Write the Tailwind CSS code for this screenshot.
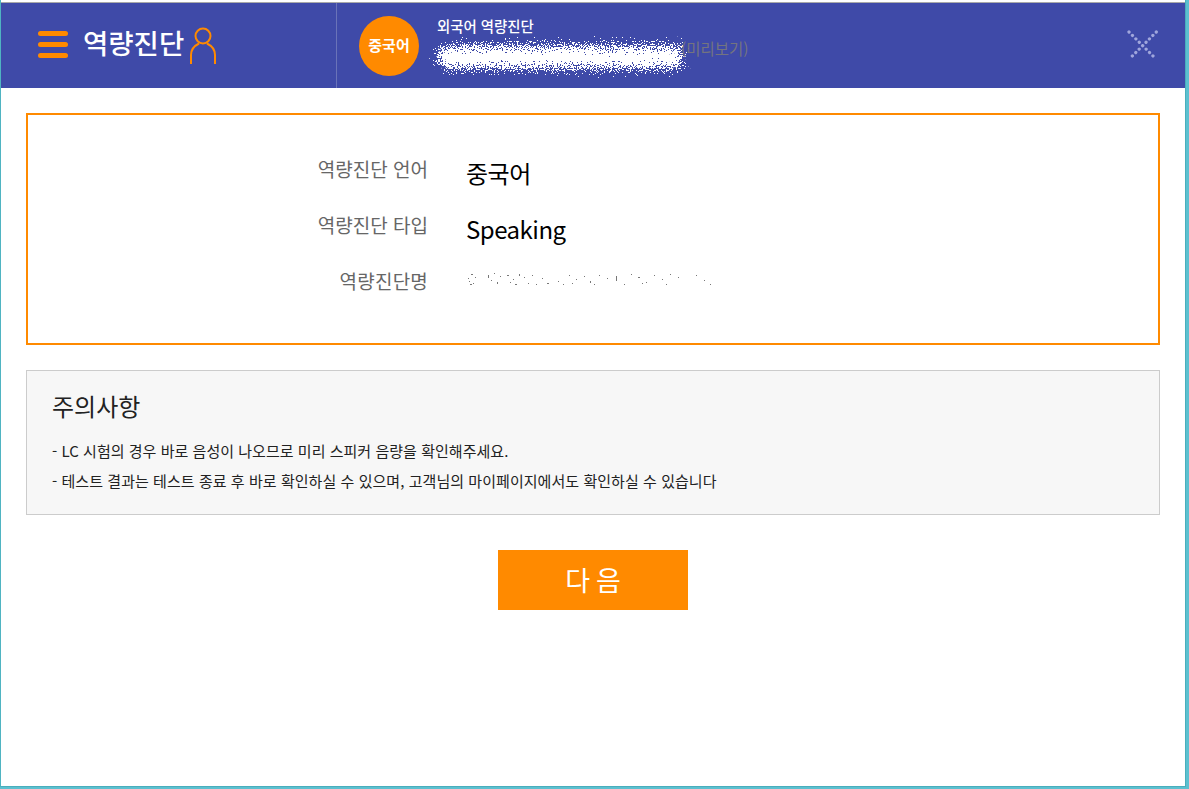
<!DOCTYPE html>
<html lang="ko">
<head>
    <meta charset="UTF-8">
    <title>역량진단</title>
    <script src="https://cdn.jsdelivr.net/npm/@tailwindcss/browser@4"></script>
</head>
<body class="bg-white font-['Noto_Sans_CJK_KR','Noto_Sans',sans-serif] overflow-hidden">
    <svg class="absolute w-0 h-0">
        <filter id="scatter" x="-10%" y="-60%" width="120%" height="220%">
            <feTurbulence type="fractalNoise" baseFrequency="0.75" numOctaves="2" seed="4" />
            <feDisplacementMap in="SourceGraphic" scale="34" xChannelSelector="R" yChannelSelector="G" />
        </filter>
    </svg>

    <div class="w-[1189px] h-[789px] border-r-[3px] border-r-[#5cc0d0] border-b-[2px] border-b-[#5cc0d0]">
        <div class="h-full flex flex-col pt-[2px] border-l border-l-[#4fb4c2] border-r border-r-[#4aaebc] border-b border-b-[#4aaebc]">
            <div class="h-px bg-[#a9a9a9] shrink-0"></div>

            <header class="h-[85px] shrink-0 bg-[#3f4aa8] flex items-center text-white">
                <div class="w-[336px] h-full flex items-center pl-[37px] border-r border-r-[#6a73b8] shrink-0">
                    <div class="flex flex-col gap-[6px] w-[30px] -mt-[2px]">
                        <span class="h-[5px] rounded-full bg-[#ff8a00]"></span>
                        <span class="h-[5px] rounded-full bg-[#ff8a00]"></span>
                        <span class="h-[5px] rounded-full bg-[#ff8a00]"></span>
                    </div>
                    <span class="ml-[15px] -mt-[6px] text-[27.5px] font-medium leading-none">역량진단</span>
                    <svg class="ml-[6px] mt-[1px]" width="26" height="38" viewBox="0 0 26 38" fill="none" stroke="#ff8a00" stroke-width="2">
                        <circle cx="13" cy="9" r="7.5" />
                        <path d="M1 37V28C1 21.5 5 18.5 9 16.5M25 37V28C25 21.5 21 18.5 17 16.5" />
                    </svg>
                </div>
                <div class="flex items-center pl-[22px] flex-1">
                    <div class="w-[60px] h-[60px] rounded-full bg-[#ff8a00] flex items-center justify-center text-[15px] font-bold shrink-0">중국어</div>
                    <div class="ml-[18px] -mt-[9px]">
                        <p class="text-[14.4px] leading-[18px] font-medium">외국어 역량진단</p>
                        <div class="flex items-center h-[30px]">
                            <svg width="262" height="44" class="-ml-[9px] -my-[7px] overflow-visible"><rect x="10" y="18" width="244" height="22" rx="10" fill="#fff" filter="url(#scatter)" /></svg>
                            <span class="-ml-[9px] -mt-[3px] text-[15.5px] text-[#74747f]">(미리보기)</span>
                        </div>
                    </div>
                </div>
                <svg class="mr-[26px] shrink-0" width="32" height="32" viewBox="0 0 32 32" stroke="#a0a6dc" stroke-width="3.2" stroke-linecap="round" stroke-dasharray="0.1 4.73">
                    <path d="M2 2L29.3 29.3M29.3 2L2 29.3" />
                </svg>
            </header>

            <main class="flex-1 px-[25px] pt-[25px]">
                <section class="h-[232px] border-2 border-[#ff8a00] pt-[29px]">
                    <dl class="grid grid-cols-[400px_1fr] gap-x-[38px]">
                        <dt class="h-[56px] text-right text-[19px] leading-[50px] text-[#666]">역량진단 언어</dt>
                        <dd class="h-[56px] text-[24px] tracking-[-0.5px] leading-[58px] text-black">중국어</dd>
                        <dt class="h-[56px] text-right text-[19px] leading-[50px] text-[#666]">역량진단 타입</dt>
                        <dd class="h-[56px] text-[24px] tracking-[-0.5px] leading-[58px] text-black">Speaking</dd>
                        <dt class="h-[56px] text-right text-[19px] tracking-[0.2px] leading-[50px] text-[#666]">역량진단명</dt>
                        <dd class="h-[56px]">
                            <svg width="250" height="34" class="mt-[8px]" fill="#777">
                                <path d="M2 14h1v1H2zM5 10h2v1H5zM9 13h1v1H9zM4 20h2v1H4zM3 17h1v1H3zM7 19h1v1H7zM22 11h1v3h-1zM25 16h1v1h-1zM28 9h1v1h-1zM34 12h1v1h-1zM31 18h1v2h-1zM41 11h2v1h-2zM44 18h1v1h-1zM47 15h1v1h-1zM53 10h1v2h-1zM58 13h1v1h-1zM62 19h1v1h-1zM49 20h2v1h-2zM66 11h1v1h-1zM70 20h1v1h-1zM76 14h1v1h-1zM81 19h2v1h-2zM92 17h1v1h-1zM97 20h1v1h-1zM103 11h1v1h-1zM106 19h1v1h-1zM110 15h1v1h-1zM118 12h1v1h-1zM124 17h1v2h-1zM128 20h1v1h-1zM133 11h1v1h-1zM141 14h1v1h-1zM150 12h1v5h-1zM158 20h1v1h-1zM165 10h1v1h-1zM172 13h2v1h-2zM176 19h1v1h-1zM180 18h1v1h-1zM188 11h1v1h-1zM196 15h1v1h-1zM200 20h1v1h-1zM204 10h1v1h-1zM212 13h1v1h-1zM230 11h1v1h-1zM238 16h1v1h-1zM244 20h1v1h-1z" />
                            </svg>
                        </dd>
                    </dl>
                </section>

                <section class="mt-[25px] h-[145px] border border-[#ccc] bg-[#f7f7f7] pl-[25px] pt-[17px] text-[#222]">
                    <h2 class="text-[24px] leading-[36px] font-normal">주의사항</h2>
                    <p class="mt-[12px] text-[15px] tracking-[0.03px] leading-[30px]">- LC 시험의 경우 바로 음성이 나오므로 미리 스피커 음량을 확인해주세요.</p>
                    <p class="text-[15px] tracking-[0.05px] leading-[30px]">- 테스트 결과는 테스트 종료 후 바로 확인하실 수 있으며, 고객님의 마이페이지에서도 확인하실 수 있습니다</p>
                </section>

                <div class="mt-[35px] flex justify-center">
                    <button class="w-[190px] h-[60px] pl-[6px] bg-[#ff8a00] text-white text-[27px] tracking-[6px]">다음</button>
                </div>
            </main>
        </div>
    </div>
</body>
</html>
